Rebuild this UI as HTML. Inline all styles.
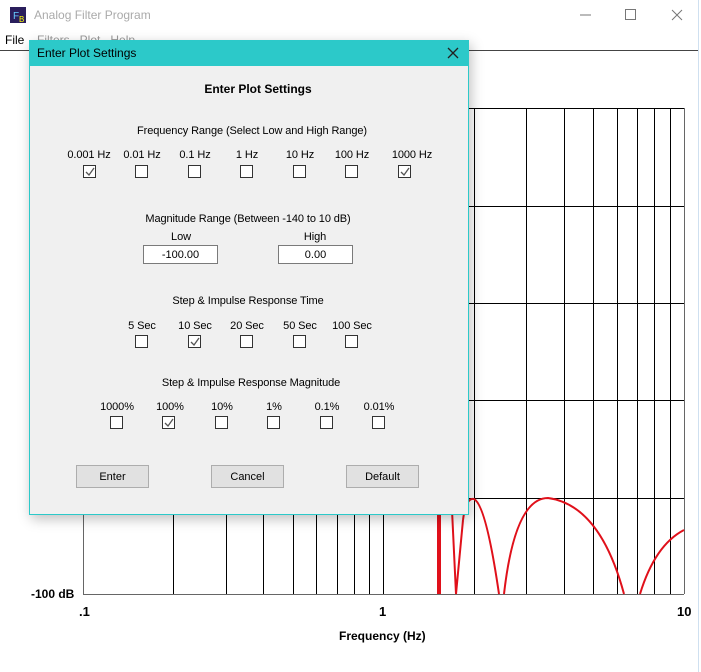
<!DOCTYPE html>
<html><head><meta charset="utf-8"><style>
*{margin:0;padding:0;box-sizing:border-box}
body{width:701px;height:672px;background:#fff;position:relative;overflow:hidden;font-family:"Liberation Sans",sans-serif;font-size:11px;color:#000}
.a{position:absolute;white-space:nowrap}
.c{position:absolute;width:13px;height:13px;border:1px solid #333;background:#fff}
.lbl{position:absolute;transform:translate(-50%,2px);white-space:nowrap;font-size:11px;letter-spacing:-0.1px}
.btn{position:absolute;width:73px;height:23px;background:#e1e1e1;border:1px solid #adadad;text-align:center;line-height:23px;font-size:11px}
.inp{position:absolute;width:75px;height:19px;background:#fff;border:1px solid #7a7a7a;text-align:center;line-height:18px;font-size:11px}
</style></head><body>
<svg class="a" style="left:0;top:0" width="701" height="672">
<rect x="10" y="7" width="16" height="16" fill="#2a1e5c"/>
<text x="13" y="19" font-size="10" fill="#6cf" font-family="Liberation Sans">F</text>
<text x="19" y="22" font-size="8" fill="#ff0" font-family="Liberation Sans">B</text>
<line x1="580" y1="15" x2="591" y2="15" stroke="#777"/>
<rect x="625.5" y="9.5" width="10" height="10" fill="none" stroke="#777"/>
<path d="M672 10 L682 20 M682 10 L672 20" stroke="#777"/>
<line x1="0" y1="50.5" x2="698" y2="50.5" stroke="#444"/>
<line x1="698.5" y1="0" x2="698.5" y2="672" stroke="#cfe0f0"/>
<g stroke="#000" stroke-width="1">
<line x1="83" y1="108.5" x2="684" y2="108.5"/>
<line x1="83" y1="206.5" x2="684" y2="206.5"/>
<line x1="83" y1="303.5" x2="684" y2="303.5"/>
<line x1="83" y1="400.5" x2="684" y2="400.5"/>
<line x1="83" y1="498.5" x2="684" y2="498.5"/>
<line x1="83" y1="594.5" x2="684" y2="594.5" stroke="#666"/>
<line x1="83.5" y1="108" x2="83.5" y2="594" stroke="#666"/>
<line x1="173.5" y1="108" x2="173.5" y2="594"/>
<line x1="226.5" y1="108" x2="226.5" y2="594"/>
<line x1="263.5" y1="108" x2="263.5" y2="594"/>
<line x1="293.5" y1="108" x2="293.5" y2="594"/>
<line x1="316.5" y1="108" x2="316.5" y2="594"/>
<line x1="337.5" y1="108" x2="337.5" y2="594"/>
<line x1="354.5" y1="108" x2="354.5" y2="594"/>
<line x1="369.5" y1="108" x2="369.5" y2="594"/>
<line x1="383.5" y1="108" x2="383.5" y2="594"/>
<line x1="474.5" y1="108" x2="474.5" y2="594"/>
<line x1="526.5" y1="108" x2="526.5" y2="594"/>
<line x1="564.5" y1="108" x2="564.5" y2="594"/>
<line x1="593.5" y1="108" x2="593.5" y2="594"/>
<line x1="617.5" y1="108" x2="617.5" y2="594"/>
<line x1="637.5" y1="108" x2="637.5" y2="594"/>
<line x1="654.5" y1="108" x2="654.5" y2="594"/>
<line x1="670.5" y1="108" x2="670.5" y2="594"/>
<line x1="684.5" y1="108" x2="684.5" y2="594" stroke="#666"/>
</g>
<g stroke="#e0101a" stroke-width="2" fill="none">
<path d="M438 594 L438 510 M440 594 L440 510"/>
<path d="M452 510 L456 594 L463 520"/>
<path d="M463 520 Q466 497 474 499 Q486 505 499 594"/>
<path d="M504 594 Q515 498 548 498 Q600 505 624 594"/>
<path d="M640 594 Q655 545 684 530"/>
</g>
<text x="31" y="598" font-size="12" font-weight="bold" font-family="Liberation Sans">-100 dB</text>
<text x="79" y="616" font-size="13" font-weight="bold" font-family="Liberation Sans">.1</text>
<text x="379" y="616" font-size="13" font-weight="bold" font-family="Liberation Sans">1</text>
<text x="677" y="616" font-size="13" font-weight="bold" font-family="Liberation Sans">10</text>
<text x="339" y="640" font-size="12" font-weight="bold" font-family="Liberation Sans">Frequency (Hz)</text>
</svg>
<div class="a" style="left:34px;top:8px;font-size:12px;color:#aaa">Analog Filter Program</div>
<div class="a" style="left:5px;top:33px;font-size:12px">File</div>
<div class="a" style="left:37px;top:33px;font-size:12px;color:#999">Filters &nbsp; Plot &nbsp; Help</div>

<div class="a" style="left:29px;top:40px;width:440px;height:475px;background:#f0f0f0;border:1px solid #2cc9c9;box-shadow:2px 4px 12px rgba(0,0,0,0.25)">
<div class="a" style="left:0;top:0;width:438px;height:25px;background:#2cc9c9"></div>
<div class="a" style="left:7px;top:5px;font-size:12px">Enter Plot Settings</div>
<svg class="a" style="left:417px;top:6px" width="12" height="12"><path d="M1 1 L11 11 M11 1 L1 11" stroke="#222" stroke-width="1.3"/></svg>
</div>
<div class="lbl" style="left:258px;top:80px;font-weight:bold;font-size:12px;letter-spacing:0">Enter Plot Settings</div>
<div class="lbl" style="left:252px;top:123px">Frequency Range (Select Low and High Range)</div>
<div class="lbl" style="left:89px;top:147px">0.001 Hz</div><div class="c" style="left:83px;top:165px"></div>
<div class="lbl" style="left:142px;top:147px">0.01 Hz</div><div class="c" style="left:135px;top:165px"></div>
<div class="lbl" style="left:195px;top:147px">0.1 Hz</div><div class="c" style="left:188px;top:165px"></div>
<div class="lbl" style="left:247px;top:147px">1 Hz</div><div class="c" style="left:240px;top:165px"></div>
<div class="lbl" style="left:300px;top:147px">10 Hz</div><div class="c" style="left:293px;top:165px"></div>
<div class="lbl" style="left:352px;top:147px">100 Hz</div><div class="c" style="left:345px;top:165px"></div>
<div class="lbl" style="left:412px;top:147px">1000 Hz</div><div class="c" style="left:398px;top:165px"></div>

<div class="lbl" style="left:248px;top:211px">Magnitude Range (Between -140 to 10 dB)</div>
<div class="lbl" style="left:181px;top:229px">Low</div>
<div class="lbl" style="left:315px;top:229px">High</div>
<div class="inp" style="left:143px;top:245px">-100.00</div>
<div class="inp" style="left:278px;top:245px">0.00</div>

<div class="lbl" style="left:248px;top:293px">Step &amp; Impulse Response Time</div>
<div class="lbl" style="left:142px;top:318px">5 Sec</div><div class="c" style="left:135px;top:335px"></div>
<div class="lbl" style="left:195px;top:318px">10 Sec</div><div class="c" style="left:188px;top:335px"></div>
<div class="lbl" style="left:247px;top:318px">20 Sec</div><div class="c" style="left:240px;top:335px"></div>
<div class="lbl" style="left:300px;top:318px">50 Sec</div><div class="c" style="left:293px;top:335px"></div>
<div class="lbl" style="left:352px;top:318px">100 Sec</div><div class="c" style="left:345px;top:335px"></div>

<div class="lbl" style="left:251px;top:375px">Step &amp; Impulse Response Magnitude</div>
<div class="lbl" style="left:117px;top:399px">1000%</div><div class="c" style="left:110px;top:416px"></div>
<div class="lbl" style="left:170px;top:399px">100%</div><div class="c" style="left:162px;top:416px"></div>
<div class="lbl" style="left:222px;top:399px">10%</div><div class="c" style="left:215px;top:416px"></div>
<div class="lbl" style="left:274px;top:399px">1%</div><div class="c" style="left:267px;top:416px"></div>
<div class="lbl" style="left:327px;top:399px">0.1%</div><div class="c" style="left:320px;top:416px"></div>
<div class="lbl" style="left:379px;top:399px">0.01%</div><div class="c" style="left:372px;top:416px"></div>

<svg class="a" style="left:0;top:0" width="701" height="672">
<g stroke="#555" stroke-width="1.3" fill="none">
<path d="M86 172 L89 175 L94 168"/>
<path d="M401 172 L404 175 L409 168"/>
<path d="M191 342 L194 345 L199 338"/>
<path d="M165 423 L168 426 L173 419"/>
</g></svg>

<div class="btn" style="left:76px;top:465px">Enter</div>
<div class="btn" style="left:211px;top:465px">Cancel</div>
<div class="btn" style="left:346px;top:465px">Default</div>
</body></html>
